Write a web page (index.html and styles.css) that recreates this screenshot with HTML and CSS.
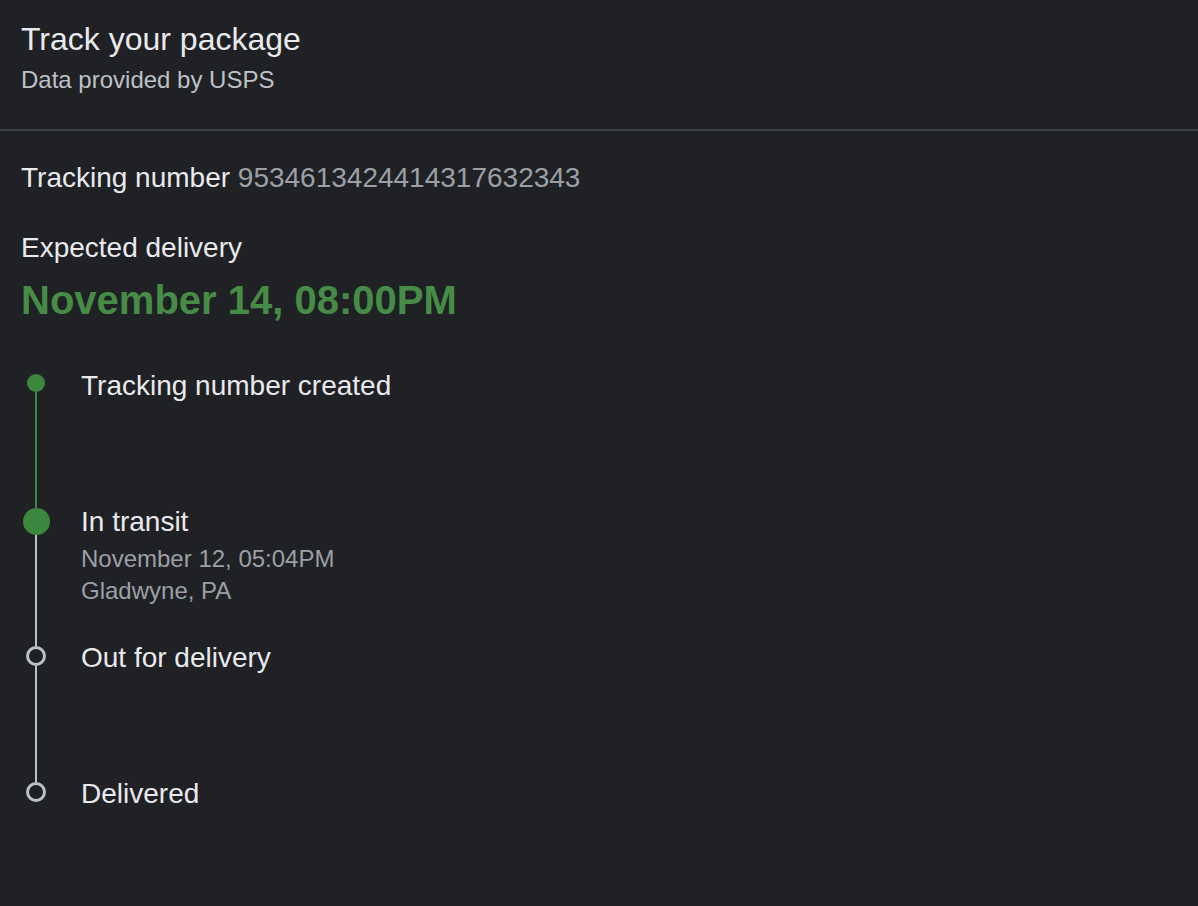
FILE: index.html
```html
<!DOCTYPE html>
<html>
<head>
	<title>Track your package</title>
	<link rel="stylesheet" href="styles.css">
</head>
<body>
<div class="track">
	<div class="track-head">
		<h1 class="title">Track your package</h1>
		<p class="source">Data provided by USPS</p>
	</div>

	<div class="track-body">
		<p class="number">Tracking number <span class="digits">9534613424414317632343</span></p>
		<p class="expect-label">Expected delivery</p>
		<p class="expect-date">November 14, 08:00PM</p>

		<ul class="timeline">
			<li class="step">
				<div class="rail">
					<span class="seg seg-top seg-none small-top"></span>
					<span class="dot dot-done"></span>
					<span class="seg seg-bottom seg-green"></span>
				</div>
				<div class="step-text">
					<div class="step-title">Tracking number created</div>
				</div>
			</li>
			<li class="step">
				<div class="rail">
					<span class="seg seg-top seg-green big-top"></span>
					<span class="dot dot-current"></span>
					<span class="seg seg-bottom seg-gray"></span>
				</div>
				<div class="step-text">
					<div class="step-title">In transit</div>
					<div class="step-info">November 12, 05:04PM<br>Gladwyne, PA</div>
				</div>
			</li>
			<li class="step">
				<div class="rail">
					<span class="seg seg-top seg-gray ring-top"></span>
					<span class="dot dot-todo"></span>
					<span class="seg seg-bottom seg-gray"></span>
				</div>
				<div class="step-text">
					<div class="step-title">Out for delivery</div>
				</div>
			</li>
			<li class="step">
				<div class="rail">
					<span class="seg seg-top seg-gray ring-top"></span>
					<span class="dot dot-todo"></span>
					<span class="seg seg-bottom seg-none"></span>
				</div>
				<div class="step-text">
					<div class="step-title">Delivered</div>
				</div>
			</li>
		</ul>
	</div>
</div>
</body>
</html>
```

FILE: styles.css
```css
*{
	padding: 0;
	margin: 0;
	list-style: none;
	box-sizing: border-box;
}
html,body{
	background: #202124;
}
body{
	font-family: "Liberation Sans", Arial, Helvetica, sans-serif;
	color: #e8eaed;
	height: 906px;
}
.track-head{
	padding: 19px 21px 31px;
	border-bottom: 2px solid #3c4043;
}
.title{
	font-size: 32px;
	line-height: 40px;
	font-weight: normal;
}
.source{
	margin-top: 3px;
	font-size: 24px;
	line-height: 36px;
	color: #bdc1c6;
}
.track-body{
	padding: 29px 21px 0;
}
.number{
	font-size: 28px;
	line-height: 36px;
}
.digits{
	color: #9aa0a6;
}
.expect-label{
	margin-top: 34px;
	font-size: 28px;
	line-height: 36px;
}
.expect-date{
	margin-top: 10px;
	font-size: 40px;
	line-height: 48px;
	font-weight: bold;
	color: #468c46;
}
.timeline{
	margin-top: 44px;
}
.step{
	display: flex;
	height: 136px;
}
.rail{
	width: 30px;
	display: flex;
	flex-direction: column;
	align-items: center;
}
.seg{
	width: 2px;
}
.seg-bottom{
	flex: 1;
}
.small-top{ height: 6px; }
.big-top{ height: 4px; }
.ring-top{ height: 6px; }
.seg-green{ background: #3b873e; }
.seg-gray{ background: #bdc1c6; }
.seg-none{ background: transparent; }
.dot{
	border-radius: 50%;
	flex: none;
}
.dot-done{
	width: 18px;
	height: 18px;
	background: #3b873e;
}
.dot-current{
	width: 27px;
	height: 27px;
	background: #3b873e;
}
.dot-todo{
	width: 20px;
	height: 20px;
	border: 3px solid #bdc1c6;
	background: #202124;
}
.step-text{
	margin-left: 30px;
}
.step-title{
	font-size: 28px;
	line-height: 36px;
}
.step-info{
	margin-top: 3px;
	font-size: 24px;
	line-height: 32px;
	color: #9aa0a6;
}
```
